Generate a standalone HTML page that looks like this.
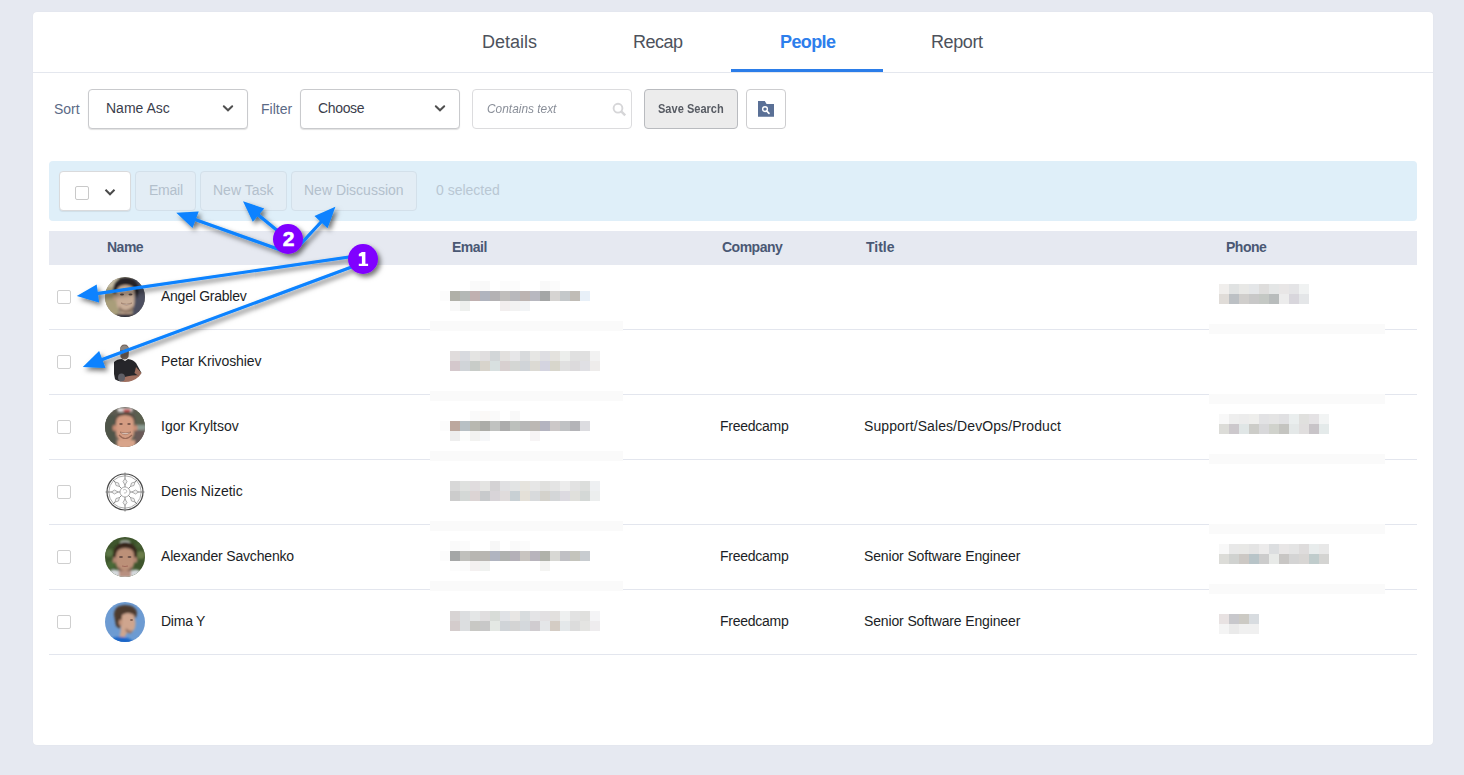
<!DOCTYPE html>
<html><head><meta charset="utf-8">
<style>
html,body{margin:0;padding:0;width:1464px;height:775px;overflow:hidden;background:#e6e9f1;font-family:"Liberation Sans",sans-serif;}
.a{position:absolute}
.t{position:absolute;line-height:1;white-space:nowrap}
#card{position:absolute;left:33px;top:12px;width:1400px;height:733px;background:#fff;border-radius:4px;box-shadow:0 0 1px rgba(0,0,0,.08)}
.tab{font-size:18px;color:#4d525c;top:33px}
.lbl{font-size:14px;color:#5b6a86;top:102px}
.sel{position:absolute;top:89px;width:158px;height:38px;border:1px solid #c9cacd;border-radius:4px;background:#fff;box-shadow:0 1px 1px rgba(0,0,0,.12)}
.seltxt{font-size:14px;color:#3b404c;top:101px}
.chev{position:absolute}
.btn{position:absolute;top:171px;height:38px;border:1px solid #d3e0ea;border-radius:4px;background:#e3edf5}
.btxt{font-size:14px;color:#b3c0cc;top:183px}
.hd{font-size:14px;font-weight:bold;color:#4a5874;top:240px;letter-spacing:-0.5px}
.nm{font-size:14px;color:#1b1e26}
.cb{position:absolute;left:57px;width:12px;height:12px;border:1px solid #cfcfcf;border-radius:2px;background:#fff}
.rowline{position:absolute;left:49px;width:1368px;height:1px;background:#e3e6ee}
.blk{position:absolute;width:10px;height:10px}
</style></head>
<body>
<div id="card"></div>

<!-- tabs -->
<div class="t tab m" style="left:482px">Details</div>
<div class="t tab m" style="left:633px;letter-spacing:-0.5px">Recap</div>
<div class="t tab m" style="left:780px;color:#2d7eec;font-weight:bold;letter-spacing:-0.6px">People</div>
<div class="t tab m" style="left:931px;letter-spacing:-0.4px">Report</div>
<div class="a" style="left:731px;top:69px;width:152px;height:3px;background:#2b7de9"></div>
<div class="a" style="left:33px;top:72px;width:1400px;height:1px;background:#e4e7ee"></div>

<!-- filter row -->
<div class="t lbl m" style="left:54px">Sort</div>
<div class="sel" style="left:88px"></div>
<div class="t seltxt m" style="left:106px">Name Asc</div>
<svg class="chev" style="left:222px;top:104px" width="12" height="9" viewBox="0 0 12 9"><path d="M1.8 2.2 L6 6.3 L10.2 2.2" fill="none" stroke="#505050" stroke-width="2" stroke-linecap="round"/></svg>
<div class="t lbl m" style="left:261px">Filter</div>
<div class="sel" style="left:300px"></div>
<div class="t seltxt m" style="left:318px;letter-spacing:-0.35px">Choose</div>
<svg class="chev" style="left:434px;top:104px" width="12" height="9" viewBox="0 0 12 9"><path d="M1.8 2.2 L6 6.3 L10.2 2.2" fill="none" stroke="#505050" stroke-width="2" stroke-linecap="round"/></svg>

<div class="a" style="left:472px;top:89px;width:158px;height:38px;border:1px solid #dcdcde;border-radius:4px;background:#fff"></div>
<div class="t m" style="left:487px;top:102px;font-size:13px;font-style:italic;color:#8a8f99;transform:scaleX(0.915);transform-origin:0 0">Contains text</div>
<svg class="a" style="left:611px;top:101px" width="16" height="16" viewBox="0 0 16 16"><circle cx="7" cy="7.2" r="4.4" fill="none" stroke="#d6d6d8" stroke-width="1.9"/><path d="M10.2 10.4 L14.2 14.4" stroke="#d6d6d8" stroke-width="2.4"/></svg>

<div class="a" style="left:644px;top:89px;width:92px;height:38px;border:1px solid #b9bbbf;border-radius:4px;background:#ececec"></div>
<div class="t m" style="left:658px;top:102px;font-size:13px;font-weight:bold;color:#575b63;transform:scaleX(0.85);transform-origin:0 0">Save Search</div>
<div class="a" style="left:746px;top:89px;width:38px;height:38px;border:1px solid #cdcdcf;border-radius:4px;background:#fff"></div>
<svg class="a" style="left:757px;top:100px" width="18" height="18" viewBox="0 0 18 18"><path d="M1 1 H7.8 L9.6 4 H17 V16.7 H1 Z" fill="#5a7096"/><circle cx="8" cy="9.1" r="2.4" fill="none" stroke="#fff" stroke-width="1.4"/><path d="M9.6 10.8 L12 13.4" stroke="#fff" stroke-width="1.7" stroke-linecap="round"/></svg>

<!-- action bar -->
<div class="a" style="left:49px;top:161px;width:1368px;height:60px;background:#dfeff9;border-radius:4px"></div>
<div class="a" style="left:59px;top:171px;width:70px;height:38px;border:1px solid #d9dadc;border-radius:4px;background:#fff;box-shadow:0 1px 1px rgba(0,0,0,.07)"></div>
<div class="a" style="left:75px;top:186px;width:12px;height:12px;border:1px solid #c9c9c9;border-radius:2px;background:#fff"></div>
<svg class="chev" style="left:104px;top:188px" width="12" height="9" viewBox="0 0 12 9"><path d="M1.5 1.8 L6 6.3 L10.5 1.8" fill="none" stroke="#4a4a4a" stroke-width="2"/></svg>
<div class="btn" style="left:135px;width:59px"></div>
<div class="t btxt m" style="left:149px;letter-spacing:-0.24px">Email</div>
<div class="btn" style="left:200px;width:85px"></div>
<div class="t btxt m" style="left:213px">New Task</div>
<div class="btn" style="left:291px;width:124px"></div>
<div class="t btxt m" style="left:304px">New Discussion</div>
<div class="t btxt m" style="left:436px;color:#b9c7d3">0 selected</div>

<!-- table header -->
<div class="a" style="left:49px;top:231px;width:1368px;height:34px;background:#e6e9f1"></div>
<div class="t hd m" style="left:107px">Name</div>
<div class="t hd m" style="left:452px">Email</div>
<div class="t hd m" style="left:722px">Company</div>
<div class="t hd m" style="left:866px;letter-spacing:0">Title</div>
<div class="t hd m" style="left:1226px">Phone</div>

<!-- rows -->
<div class="rowline" style="top:329px"></div>
<div class="rowline" style="top:394px"></div>
<div class="rowline" style="top:459px"></div>
<div class="rowline" style="top:524px"></div>
<div class="rowline" style="top:589px"></div>
<div class="rowline" style="top:654px"></div>

<div class="cb" style="top:290px"></div>
<div class="cb" style="top:355px"></div>
<div class="cb" style="top:420px"></div>
<div class="cb" style="top:485px"></div>
<div class="cb" style="top:550px"></div>
<div class="cb" style="top:615px"></div>

<div class="t nm m" style="left:161px;top:289px;letter-spacing:-0.25px">Angel Grablev</div>
<div class="t nm m" style="left:161px;top:354px;letter-spacing:-0.1px">Petar Krivoshiev</div>
<div class="t nm m" style="left:161px;top:419px">Igor Kryltsov</div>
<div class="t nm m" style="left:161px;top:484px">Denis Nizetic</div>
<div class="t nm m" style="left:161px;top:549px;letter-spacing:-0.17px">Alexander Savchenko</div>
<div class="t nm m" style="left:161px;top:614px;letter-spacing:-0.25px">Dima Y</div>

<div class="t nm m" style="left:720px;top:419px;letter-spacing:-0.25px">Freedcamp</div>
<div class="t nm m" style="left:864px;top:419px;letter-spacing:0.09px">Support/Sales/DevOps/Product</div>
<div class="t nm m" style="left:720px;top:549px;letter-spacing:-0.25px">Freedcamp</div>
<div class="t nm m" style="left:864px;top:549px;letter-spacing:-0.14px">Senior Software Engineer</div>
<div class="t nm m" style="left:720px;top:614px;letter-spacing:-0.25px">Freedcamp</div>
<div class="t nm m" style="left:864px;top:614px;letter-spacing:-0.14px">Senior Software Engineer</div>

<!-- AVATARS -->
<svg class="a" style="left:103px;top:275px" width="44" height="44" viewBox="0 0 44 44">
<defs><clipPath id="c1"><circle cx="22" cy="22" r="20"/></clipPath><filter id="bl" x="-20%" y="-20%" width="140%" height="140%"><feGaussianBlur stdDeviation="0.9"/></filter><filter id="bl2" x="-50%" y="-50%" width="200%" height="200%"><feGaussianBlur stdDeviation="0.5"/></filter></defs>
<g clip-path="url(#c1)"><rect width="44" height="44" fill="#8f8a78"/>
<g filter="url(#bl)">
<rect x="0" y="0" width="15" height="44" fill="#a99e7a"/>
<rect x="0" y="0" width="15" height="12" fill="#c4bca4"/>
<rect x="30" y="0" width="14" height="44" fill="#4d5060"/>
<path d="M10 18 Q9 3 23 2.5 Q36 3 36 16 L34 24 L31 14 Q23 10 15 14 L13 22 Z" fill="#272325"/>
<path d="M13.5 17 Q14.5 10 22.5 10 Q31 10 31.5 17 L31.5 28 Q30.5 37 22 39 Q14.5 37 13.5 28 Z" fill="#c9ae98"/>
<ellipse cx="12" cy="22" rx="2" ry="3.5" fill="#c2a48c"/>
<path d="M16 31 Q22 39 30 31 L30 35 Q23 41 16 35 Z" fill="#8c7464"/>
<rect x="15" y="38" width="14" height="8" fill="#c4a48e"/>
<path d="M8 42 L15 39 L29 39 L36 42 L36 46 L8 46 Z" fill="#30303c"/>
</g>
<g filter="url(#bl2)">
<ellipse cx="19" cy="19.5" rx="2" ry="0.9" fill="#5a4a44"/>
<ellipse cx="27.5" cy="19.5" rx="2" ry="0.9" fill="#5a4a44"/>
<path d="M18 28 Q23.5 32 29 28 Q23.5 30.5 18 28 Z" fill="#f0e8e0" stroke="#8a6a5a" stroke-width="0.5"/>
</g></g></svg>
<svg class="a" style="left:103px;top:340px" width="44" height="44" viewBox="0 0 44 44">
<defs><clipPath id="c2"><circle cx="22" cy="22" r="20"/></clipPath><filter id="bl3" x="-20%" y="-20%" width="140%" height="140%"><feGaussianBlur stdDeviation="0.7"/></filter></defs>
<g clip-path="url(#c2)" filter="url(#bl3)">
<path d="M17 10 Q17 4.5 21.5 4.5 Q26 4.5 26 10 L25.5 17 Q24 19.5 21.5 19.5 Q19 19.5 17.5 17 Z" fill="#76665c"/>
<path d="M17 8 Q21.5 3 26 8 L26 10 L17 10 Z" fill="#8c8682"/>
<path d="M11 22 Q14 19 19 19 L22 21 L25 19 Q30 19.5 33 23 L38.5 33 L37 44 L13 44 L11 34 Z" fill="#27272a"/>
<path d="M17 39 Q26 34.5 38 35.5 L37.5 41 Q28 41.5 19 44 Z" fill="#a07060"/>
<path d="M33 27 L38.5 33 L37 37 L31.5 33 Z" fill="#9a6c5c"/>
<ellipse cx="18.5" cy="37.5" rx="3.5" ry="4" fill="#5e5e66"/>
</g></svg>
<svg class="a" style="left:103px;top:405px" width="44" height="44" viewBox="0 0 44 44">
<defs><clipPath id="c3"><circle cx="22" cy="22" r="20"/></clipPath></defs>
<g clip-path="url(#c3)"><rect width="44" height="44" fill="#5c5a50"/>
<g filter="url(#bl)">
<rect x="0" y="10" width="12" height="34" fill="#505448"/>
<rect x="33" y="6" width="11" height="14" fill="#5a6050"/>
<rect x="34" y="20" width="10" height="5" fill="#8a9a90"/>
<rect x="32" y="25" width="12" height="15" fill="#6a5a58"/>
<path d="M14 3 L30 3 L29 7 L15 7 Z" fill="#e0dada"/>
<ellipse cx="24" cy="5.5" rx="4" ry="1.5" fill="#c04848"/>
<path d="M12 18 Q12 8 22 8 Q32 8 32 18 Z" fill="#3c322c"/>
<path d="M13 17 Q13 10 22 10 Q31 10 31 17 L31 29 Q29 37 22 37 Q15 37 13 29 Z" fill="#d49c82"/>
<ellipse cx="11.5" cy="23" rx="2" ry="3" fill="#c88c74"/>
<ellipse cx="32.5" cy="23" rx="2" ry="3" fill="#c88c74"/>
<rect x="14" y="35" width="18" height="10" fill="#d8a48a"/>
</g>
<g filter="url(#bl2)">
<ellipse cx="18" cy="19" rx="1.8" ry="0.8" fill="#5a3c34"/>
<ellipse cx="26" cy="19" rx="1.8" ry="0.8" fill="#5a3c34"/>
<path d="M17 27 Q22 32 28 27 Q22 29 17 27 Z" fill="#f4e8e0" stroke="#8a5a4a" stroke-width="0.6"/>
<path d="M16 30 Q22 37 29 30" fill="none" stroke="#9a6a58" stroke-width="1.2"/>
</g></g></svg>
<svg class="a" style="left:103px;top:470px" width="44" height="44" viewBox="0 0 44 44">
<g fill="none">
<circle cx="22" cy="22" r="18" stroke-width="1.2" stroke="#4a4a4a"/>
<circle cx="22" cy="22" r="16.2" stroke-width="0.7" stroke="#8a8a8a"/>
<circle cx="22" cy="22" r="5" stroke-width="0.8" stroke="#9a9a9a"/>
<g stroke="#7a7a7a" stroke-width="0.9">
<path d="M22 2.5 V17 M22 27 V41.5 M2.5 22 H17 M27 22 H41.5"/>
<path d="M9.3 9.3 L18.5 18.5 M25.5 25.5 L34.7 34.7 M34.7 9.3 L25.5 18.5 M18.5 25.5 L9.3 34.7"/>
</g>
<g stroke="#9a9a9a" stroke-width="0.8" fill="#f0f0f0">
<path d="M22 8.5 L24 11.5 L22 15 L20 11.5 Z M22 29 L24 32.5 L22 35.5 L20 32.5 Z M8.5 22 L11.5 20 L15 22 L11.5 24 Z M29 22 L32.5 20 L35.5 22 L32.5 24 Z"/>
<path d="M12 12 L15.5 13 L16.5 16.5 L13 15.5 Z M32 32 L28.5 31 L27.5 27.5 L31 28.5 Z M32 12 L31 15.5 L27.5 16.5 L28.5 13 Z M12 32 L13 28.5 L16.5 27.5 L15.5 31 Z"/>
</g>
<path d="M20 20 Q22 18 24 21 Q23 24 21 23" stroke="#aaa" stroke-width="0.7"/>
</g></svg>
<svg class="a" style="left:103px;top:535px" width="44" height="44" viewBox="0 0 44 44">
<defs><clipPath id="c5"><circle cx="22" cy="22" r="20"/></clipPath></defs>
<g clip-path="url(#c5)"><rect width="44" height="44" fill="#3e552c"/>
<g filter="url(#bl)">
<circle cx="6" cy="18" r="4" fill="#5a7444"/>
<circle cx="8" cy="30" r="4" fill="#4a6a38"/>
<circle cx="38" cy="20" r="4" fill="#6a7c48"/>
<circle cx="36" cy="10" r="3" fill="#4a6036"/>
<path d="M17 7 Q22 5 27 7" stroke="#c8c8c8" stroke-width="1.5" fill="none"/>
<path d="M10 24 Q9 9 22 7 Q35 8 34 22 L32 28 L30 16 Q22 13 14 16 L13 28 Z" fill="#38281e"/>
<path d="M13 20 Q14 13 22 13 Q31 13 31 20 L31 29 Q29 38 22 38 Q15 38 13 29 Z" fill="#bc9078"/>
<ellipse cx="11.5" cy="25" rx="2" ry="3" fill="#b08470"/>
<ellipse cx="32.5" cy="25" rx="2" ry="3" fill="#b08470"/>
<path d="M15 31 Q22 41 29 31 L29 36 Q22 42 15 36 Z" fill="#7c5e50"/>
<path d="M4 38 Q10 32 16 36 L28 36 Q34 32 40 38 L40 46 L4 46 Z" fill="#d4d8dc"/>
<rect x="16" y="36" width="12" height="6" fill="#b89080"/>
</g>
<g filter="url(#bl2)">
<ellipse cx="18" cy="22" rx="2" ry="1" fill="#6a5048"/>
<ellipse cx="26.5" cy="22" rx="2" ry="1" fill="#6a5048"/>
<path d="M19 31 Q22 32 25 31" stroke="#a0685a" stroke-width="1" fill="none"/>
</g></g></svg>
<svg class="a" style="left:103px;top:600px" width="44" height="44" viewBox="0 0 44 44">
<defs><clipPath id="c6"><circle cx="22" cy="22" r="20"/></clipPath></defs>
<g clip-path="url(#c6)"><rect width="44" height="44" fill="#6d9bd2"/>
<g filter="url(#bl)">
<path d="M11 15 Q11 5 22 5 Q33 5 34 13 L33 18 L24 13 L19 20 L17 29 L13 26 Z" fill="#4e3b2e"/>
<path d="M19 15 Q25 11 31 15 L32.5 22 Q33 29 29 32 L24 33 L21 38 L16 38 Q18 32 18 26 Z" fill="#cfa58e"/>
<ellipse cx="17.5" cy="22.5" rx="1.8" ry="3" fill="#c0927a"/>
<path d="M23 28 Q27 32 30 30 L28 33.5 Q24 33.5 22.5 31 Z" fill="#9c7868"/>
<path d="M4 41 Q12 36 20 37 Q27 38 31 42 L31 46 L4 46 Z" fill="#1c66c8"/>
</g>
<g filter="url(#bl2)">
<ellipse cx="28.5" cy="20" rx="1.6" ry="0.7" fill="#6a4a3c"/>
</g></g></svg>
<!-- BLOCKS -->
<div class="a" style="left:430px;top:321px;width:193px;height:10px;background:#fafafa"></div>
<div class="a" style="left:430px;top:391px;width:193px;height:10px;background:#fafafa"></div>
<div class="a" style="left:430px;top:451px;width:193px;height:10px;background:#fafafa"></div>
<div class="a" style="left:430px;top:521px;width:193px;height:10px;background:#fafafa"></div>
<div class="a" style="left:430px;top:581px;width:193px;height:10px;background:#fafafa"></div>
<div class="a" style="left:1209px;top:324px;width:176px;height:10px;background:#fafafa"></div>
<div class="a" style="left:1209px;top:394px;width:176px;height:10px;background:#fafafa"></div>
<div class="a" style="left:1209px;top:454px;width:176px;height:10px;background:#fafafa"></div>
<div class="a" style="left:1209px;top:524px;width:176px;height:10px;background:#fafafa"></div>
<div class="a" style="left:1209px;top:584px;width:176px;height:10px;background:#fafafa"></div>
<div class="blk" style="left:470px;top:281px;background:#fafafa"></div><div class="blk" style="left:480px;top:281px;background:#f9f9f9"></div><div class="blk" style="left:500px;top:281px;background:#fcfcfc"></div><div class="blk" style="left:510px;top:281px;background:#fcfcfc"></div><div class="blk" style="left:540px;top:281px;background:#f9f9f9"></div><div class="blk" style="left:550px;top:281px;background:#fbfbfb"></div>
<div class="blk" style="left:440px;top:291px;background:#fcfcfc"></div><div class="blk" style="left:450px;top:291px;background:#b0b0a8"></div><div class="blk" style="left:460px;top:291px;background:#b4b8b6"></div><div class="blk" style="left:470px;top:291px;background:#c0b0b0"></div><div class="blk" style="left:480px;top:291px;background:#b0b4be"></div><div class="blk" style="left:490px;top:291px;background:#b4b2b4"></div><div class="blk" style="left:500px;top:291px;background:#c0bebc"></div><div class="blk" style="left:510px;top:291px;background:#b8b8bc"></div><div class="blk" style="left:520px;top:291px;background:#bcb4b2"></div><div class="blk" style="left:530px;top:291px;background:#b8b8c0"></div><div class="blk" style="left:540px;top:291px;background:#a4a6a6"></div><div class="blk" style="left:550px;top:291px;background:#d6d4d2"></div><div class="blk" style="left:560px;top:291px;background:#c4c8ca"></div><div class="blk" style="left:570px;top:291px;background:#c0bcb6"></div><div class="blk" style="left:580px;top:291px;background:#e8f0f8"></div>
<div class="blk" style="left:450px;top:301px;background:#f8f8f8"></div><div class="blk" style="left:460px;top:301px;background:#eef0ee"></div><div class="blk" style="left:500px;top:301px;background:#f2eeee"></div><div class="blk" style="left:510px;top:301px;background:#f2f2f2"></div><div class="blk" style="left:520px;top:301px;background:#f2f4f6"></div>
<div class="blk" style="left:450px;top:351px;background:#e0dcdc"></div><div class="blk" style="left:460px;top:351px;background:#d8dadf"></div><div class="blk" style="left:470px;top:351px;background:#e4e4e2"></div><div class="blk" style="left:480px;top:351px;background:#e0dedf"></div><div class="blk" style="left:490px;top:351px;background:#d2d6d8"></div><div class="blk" style="left:500px;top:351px;background:#e2e0de"></div><div class="blk" style="left:510px;top:351px;background:#e6e6e8"></div><div class="blk" style="left:520px;top:351px;background:#d8dadc"></div><div class="blk" style="left:530px;top:351px;background:#e6e6e4"></div><div class="blk" style="left:540px;top:351px;background:#dedee2"></div><div class="blk" style="left:550px;top:351px;background:#e4e2de"></div><div class="blk" style="left:560px;top:351px;background:#eceeec"></div><div class="blk" style="left:570px;top:351px;background:#e0e0e0"></div><div class="blk" style="left:580px;top:351px;background:#e0e0e0"></div><div class="blk" style="left:590px;top:351px;background:#f2f2f2"></div>
<div class="blk" style="left:450px;top:361px;background:#d4c8cc"></div><div class="blk" style="left:460px;top:361px;background:#d0d4d8"></div><div class="blk" style="left:470px;top:361px;background:#c8ccc8"></div><div class="blk" style="left:480px;top:361px;background:#d8d4cc"></div><div class="blk" style="left:490px;top:361px;background:#d8e0e0"></div><div class="blk" style="left:500px;top:361px;background:#d8d0d0"></div><div class="blk" style="left:510px;top:361px;background:#d4d6d4"></div><div class="blk" style="left:520px;top:361px;background:#d0d4d8"></div><div class="blk" style="left:530px;top:361px;background:#dcdad4"></div><div class="blk" style="left:540px;top:361px;background:#d4d4e0"></div><div class="blk" style="left:550px;top:361px;background:#d8d6cc"></div><div class="blk" style="left:560px;top:361px;background:#e0e0e0"></div><div class="blk" style="left:570px;top:361px;background:#dcdadc"></div><div class="blk" style="left:580px;top:361px;background:#e0e0e4"></div><div class="blk" style="left:590px;top:361px;background:#eeeceb"></div>
<div class="blk" style="left:470px;top:411px;background:#fafafa"></div><div class="blk" style="left:480px;top:411px;background:#fbf9f7"></div><div class="blk" style="left:490px;top:411px;background:#fafafa"></div><div class="blk" style="left:510px;top:411px;background:#f9f9f9"></div>
<div class="blk" style="left:440px;top:421px;background:#fcfcfc"></div><div class="blk" style="left:450px;top:421px;background:#bca89e"></div><div class="blk" style="left:460px;top:421px;background:#b8c0c4"></div><div class="blk" style="left:470px;top:421px;background:#b8b8b0"></div><div class="blk" style="left:480px;top:421px;background:#acaca8"></div><div class="blk" style="left:490px;top:421px;background:#c0c2c0"></div><div class="blk" style="left:500px;top:421px;background:#acacac"></div><div class="blk" style="left:510px;top:421px;background:#bcc0bc"></div><div class="blk" style="left:520px;top:421px;background:#b8b8b8"></div><div class="blk" style="left:530px;top:421px;background:#bcb8b4"></div><div class="blk" style="left:540px;top:421px;background:#b4b4c0"></div><div class="blk" style="left:550px;top:421px;background:#ccc8c8"></div><div class="blk" style="left:560px;top:421px;background:#c0c2c4"></div><div class="blk" style="left:570px;top:421px;background:#b4b4b8"></div><div class="blk" style="left:580px;top:421px;background:#dcdce0"></div>
<div class="blk" style="left:450px;top:431px;background:#eeeeee"></div><div class="blk" style="left:460px;top:431px;background:#fcfdfc"></div><div class="blk" style="left:470px;top:431px;background:#f2f2f0"></div><div class="blk" style="left:480px;top:431px;background:#f6f7f9"></div><div class="blk" style="left:530px;top:431px;background:#f7f4f5"></div>
<div class="blk" style="left:450px;top:481px;background:#d8d8d8"></div><div class="blk" style="left:460px;top:481px;background:#dfe1df"></div><div class="blk" style="left:470px;top:481px;background:#e0dcde"></div><div class="blk" style="left:480px;top:481px;background:#e4e4e2"></div><div class="blk" style="left:490px;top:481px;background:#d4d2d4"></div><div class="blk" style="left:500px;top:481px;background:#e0e0e2"></div><div class="blk" style="left:510px;top:481px;background:#e2e4e4"></div><div class="blk" style="left:520px;top:481px;background:#e6e4de"></div><div class="blk" style="left:530px;top:481px;background:#e6e6e6"></div><div class="blk" style="left:540px;top:481px;background:#e0e0de"></div><div class="blk" style="left:550px;top:481px;background:#e4e4e4"></div><div class="blk" style="left:560px;top:481px;background:#ececec"></div><div class="blk" style="left:570px;top:481px;background:#e2e2e2"></div><div class="blk" style="left:580px;top:481px;background:#dcdedc"></div><div class="blk" style="left:590px;top:481px;background:#eef0f2"></div>
<div class="blk" style="left:450px;top:491px;background:#cccccc"></div><div class="blk" style="left:460px;top:491px;background:#d4d8d6"></div><div class="blk" style="left:470px;top:491px;background:#dcd4d4"></div><div class="blk" style="left:480px;top:491px;background:#c8cacc"></div><div class="blk" style="left:490px;top:491px;background:#d8d4d8"></div><div class="blk" style="left:500px;top:491px;background:#e0dcdc"></div><div class="blk" style="left:510px;top:491px;background:#c8d0d4"></div><div class="blk" style="left:520px;top:491px;background:#e4e0d8"></div><div class="blk" style="left:530px;top:491px;background:#d8dadc"></div><div class="blk" style="left:540px;top:491px;background:#d4d2cc"></div><div class="blk" style="left:550px;top:491px;background:#d4d6d8"></div><div class="blk" style="left:560px;top:491px;background:#dcdae0"></div><div class="blk" style="left:570px;top:491px;background:#e0e0dc"></div><div class="blk" style="left:580px;top:491px;background:#d4d8d6"></div><div class="blk" style="left:590px;top:491px;background:#eceeee"></div>
<div class="blk" style="left:450px;top:541px;background:#fafafa"></div><div class="blk" style="left:460px;top:541px;background:#fbfbfb"></div><div class="blk" style="left:490px;top:541px;background:#f7f7f7"></div><div class="blk" style="left:510px;top:541px;background:#fafafa"></div><div class="blk" style="left:520px;top:541px;background:#fbfbfb"></div>
<div class="blk" style="left:440px;top:551px;background:#fcfcfc"></div><div class="blk" style="left:450px;top:551px;background:#a4a6a6"></div><div class="blk" style="left:460px;top:551px;background:#c0c0bc"></div><div class="blk" style="left:470px;top:551px;background:#b8b6b2"></div><div class="blk" style="left:480px;top:551px;background:#b8b6b2"></div><div class="blk" style="left:490px;top:551px;background:#b0b4c0"></div><div class="blk" style="left:500px;top:551px;background:#b0b2b0"></div><div class="blk" style="left:510px;top:551px;background:#b4b0b8"></div><div class="blk" style="left:520px;top:551px;background:#c8c4c0"></div><div class="blk" style="left:530px;top:551px;background:#b8b4bc"></div><div class="blk" style="left:540px;top:551px;background:#b0b2aa"></div><div class="blk" style="left:550px;top:551px;background:#d8d8d4"></div><div class="blk" style="left:560px;top:551px;background:#c0c0c4"></div><div class="blk" style="left:570px;top:551px;background:#c4c4bc"></div><div class="blk" style="left:580px;top:551px;background:#c8ccd0"></div>
<div class="blk" style="left:450px;top:561px;background:#fcfcfc"></div><div class="blk" style="left:460px;top:561px;background:#fbfbfb"></div><div class="blk" style="left:470px;top:561px;background:#f4f0f0"></div><div class="blk" style="left:480px;top:561px;background:#f0f2f0"></div><div class="blk" style="left:540px;top:561px;background:#f4f4f2"></div>
<div class="blk" style="left:450px;top:611px;background:#d8d4d4"></div><div class="blk" style="left:460px;top:611px;background:#dcdee0"></div><div class="blk" style="left:470px;top:611px;background:#e4e6e6"></div><div class="blk" style="left:480px;top:611px;background:#e0dedf"></div><div class="blk" style="left:490px;top:611px;background:#d8dcd8"></div><div class="blk" style="left:500px;top:611px;background:#e0e2e6"></div><div class="blk" style="left:510px;top:611px;background:#e8e6e4"></div><div class="blk" style="left:520px;top:611px;background:#d8dcde"></div><div class="blk" style="left:530px;top:611px;background:#e4e4e6"></div><div class="blk" style="left:540px;top:611px;background:#e2e0e2"></div><div class="blk" style="left:550px;top:611px;background:#e2e0de"></div><div class="blk" style="left:560px;top:611px;background:#eef0f0"></div><div class="blk" style="left:570px;top:611px;background:#e2e2e2"></div><div class="blk" style="left:580px;top:611px;background:#e0e0de"></div><div class="blk" style="left:590px;top:611px;background:#f4f4f6"></div>
<div class="blk" style="left:450px;top:621px;background:#d4cccc"></div><div class="blk" style="left:460px;top:621px;background:#dcdee0"></div><div class="blk" style="left:470px;top:621px;background:#c8c8c4"></div><div class="blk" style="left:480px;top:621px;background:#c8c8c8"></div><div class="blk" style="left:490px;top:621px;background:#e4e8e4"></div><div class="blk" style="left:500px;top:621px;background:#d0d4d8"></div><div class="blk" style="left:510px;top:621px;background:#d4d4d4"></div><div class="blk" style="left:520px;top:621px;background:#d4d8dc"></div><div class="blk" style="left:530px;top:621px;background:#d0ccd0"></div><div class="blk" style="left:540px;top:621px;background:#e4e6e8"></div><div class="blk" style="left:550px;top:621px;background:#d4ccc4"></div><div class="blk" style="left:560px;top:621px;background:#e4e8ea"></div><div class="blk" style="left:570px;top:621px;background:#dcdcdc"></div><div class="blk" style="left:580px;top:621px;background:#e4e4e2"></div><div class="blk" style="left:590px;top:621px;background:#eeecee"></div>
<div class="blk" style="left:1219px;top:284px;background:#f0eeec"></div><div class="blk" style="left:1229px;top:284px;background:#e0e2e2"></div><div class="blk" style="left:1239px;top:284px;background:#e8e8e6"></div><div class="blk" style="left:1249px;top:284px;background:#e4e6e8"></div><div class="blk" style="left:1259px;top:284px;background:#dedddc"></div><div class="blk" style="left:1269px;top:284px;background:#e4e6e6"></div><div class="blk" style="left:1279px;top:284px;background:#e8e6e6"></div><div class="blk" style="left:1289px;top:284px;background:#e4e4e6"></div><div class="blk" style="left:1299px;top:284px;background:#f0f2f2"></div>
<div class="blk" style="left:1219px;top:294px;background:#e0dcd8"></div><div class="blk" style="left:1229px;top:294px;background:#bcc0c4"></div><div class="blk" style="left:1239px;top:294px;background:#d0cecc"></div><div class="blk" style="left:1249px;top:294px;background:#c8c8c8"></div><div class="blk" style="left:1259px;top:294px;background:#c4c8c4"></div><div class="blk" style="left:1269px;top:294px;background:#b8bcbc"></div><div class="blk" style="left:1279px;top:294px;background:#ececec"></div><div class="blk" style="left:1289px;top:294px;background:#d8d6dc"></div><div class="blk" style="left:1299px;top:294px;background:#e4e6e8"></div>
<div class="blk" style="left:1219px;top:414px;background:#f8f8f8"></div><div class="blk" style="left:1229px;top:414px;background:#eeeeee"></div><div class="blk" style="left:1239px;top:414px;background:#ececec"></div><div class="blk" style="left:1249px;top:414px;background:#eeeeec"></div><div class="blk" style="left:1259px;top:414px;background:#e2e2e4"></div><div class="blk" style="left:1269px;top:414px;background:#e4e4e4"></div><div class="blk" style="left:1279px;top:414px;background:#e0e0e2"></div><div class="blk" style="left:1289px;top:414px;background:#eaeeee"></div><div class="blk" style="left:1299px;top:414px;background:#e0e0de"></div><div class="blk" style="left:1309px;top:414px;background:#e4e2e4"></div><div class="blk" style="left:1319px;top:414px;background:#f2f4f4"></div>
<div class="blk" style="left:1219px;top:424px;background:#dcdcd8"></div><div class="blk" style="left:1229px;top:424px;background:#ccc8cc"></div><div class="blk" style="left:1239px;top:424px;background:#e0e6e6"></div><div class="blk" style="left:1249px;top:424px;background:#ccccc8"></div><div class="blk" style="left:1259px;top:424px;background:#d8d8da"></div><div class="blk" style="left:1269px;top:424px;background:#d0d2cc"></div><div class="blk" style="left:1279px;top:424px;background:#c4c4c0"></div><div class="blk" style="left:1289px;top:424px;background:#e4e8e8"></div><div class="blk" style="left:1299px;top:424px;background:#e0dede"></div><div class="blk" style="left:1309px;top:424px;background:#c8c4c8"></div><div class="blk" style="left:1319px;top:424px;background:#e4eaea"></div>
<div class="blk" style="left:1219px;top:544px;background:#f8f8f8"></div><div class="blk" style="left:1229px;top:544px;background:#e8e8e8"></div><div class="blk" style="left:1239px;top:544px;background:#e8e8e6"></div><div class="blk" style="left:1249px;top:544px;background:#e4e4e4"></div><div class="blk" style="left:1259px;top:544px;background:#ecebeb"></div><div class="blk" style="left:1269px;top:544px;background:#dcdee0"></div><div class="blk" style="left:1279px;top:544px;background:#e8e6e6"></div><div class="blk" style="left:1289px;top:544px;background:#e4e4e4"></div><div class="blk" style="left:1299px;top:544px;background:#dedcdc"></div><div class="blk" style="left:1309px;top:544px;background:#e8ecec"></div><div class="blk" style="left:1319px;top:544px;background:#e8e8e8"></div>
<div class="blk" style="left:1219px;top:554px;background:#dcdcd8"></div><div class="blk" style="left:1229px;top:554px;background:#d0d2d0"></div><div class="blk" style="left:1239px;top:554px;background:#ccc8c4"></div><div class="blk" style="left:1249px;top:554px;background:#b8c4c8"></div><div class="blk" style="left:1259px;top:554px;background:#cccccc"></div><div class="blk" style="left:1269px;top:554px;background:#e8eae8"></div><div class="blk" style="left:1279px;top:554px;background:#c8c6c4"></div><div class="blk" style="left:1289px;top:554px;background:#d4d4d4"></div><div class="blk" style="left:1299px;top:554px;background:#d8d6d4"></div><div class="blk" style="left:1309px;top:554px;background:#c0cccc"></div><div class="blk" style="left:1319px;top:554px;background:#d4d4d2"></div>
<div class="blk" style="left:1219px;top:614px;background:#e8e2e2"></div><div class="blk" style="left:1229px;top:614px;background:#c8c8cc"></div><div class="blk" style="left:1239px;top:614px;background:#cccac4"></div><div class="blk" style="left:1249px;top:614px;background:#d8dce0"></div>
<div class="blk" style="left:1219px;top:624px;background:#f4f4f4"></div><div class="blk" style="left:1229px;top:624px;background:#eaeaea"></div><div class="blk" style="left:1239px;top:624px;background:#f0f0f0"></div><div class="blk" style="left:1249px;top:624px;background:#f0f0f0"></div>
<!-- ANNOT -->
<svg class="a" style="left:0;top:0" width="1464" height="775" viewBox="0 0 1464 775">
<defs><filter id="sh" x="-50%" y="-50%" width="200%" height="200%"><feDropShadow dx="2.5" dy="3" stdDeviation="2.6" flood-color="#000" flood-opacity="0.55"/></filter></defs>
<g filter="url(#sh)" fill="#0882ff" stroke="none">
<line x1="195" y1="219.5" x2="282" y2="250.5" stroke="#0882ff" stroke-width="3.2"/>
<polygon points="176.3,212.7 198.7,211.4 192.5,228"/>
<line x1="258" y1="214.7" x2="284" y2="236" stroke="#0882ff" stroke-width="3.2"/>
<polygon points="243,201.2 264.2,208.4 252.8,221.8"/>
<line x1="321.5" y1="221.5" x2="297" y2="248" stroke="#0882ff" stroke-width="3.2"/>
<polygon points="335.4,206.7 314.5,216.1 327.5,228.2"/>
<line x1="97" y1="293.6" x2="356" y2="256" stroke="#0882ff" stroke-width="3.2"/>
<polygon points="76.8,296 96.7,284.6 99.1,302.4"/>
<line x1="101.5" y1="359.8" x2="357" y2="265" stroke="#0882ff" stroke-width="3.2"/>
<polygon points="82.8,367 99.1,351 105.5,368"/>
<circle cx="288" cy="239" r="15" fill="#8000ff"/>
<circle cx="363" cy="259" r="15" fill="#8000ff"/>
</g>
<text x="0" y="0" transform="translate(288.6 246.1) scale(1.08 1)" font-family="Liberation Sans" font-weight="bold" font-size="19.5" fill="#fff" stroke="#fff" stroke-width="0.5" text-anchor="middle">2</text>
<path d="M361.9 252 L365.4 252 L365.4 263.8 L368.1 263.8 L368.1 266.1 L358.8 266.1 L358.8 263.8 L361.9 263.8 L361.9 256.3 L358.8 256.3 L358.8 254 Z" fill="#fff"/>
</svg>
</body></html>
